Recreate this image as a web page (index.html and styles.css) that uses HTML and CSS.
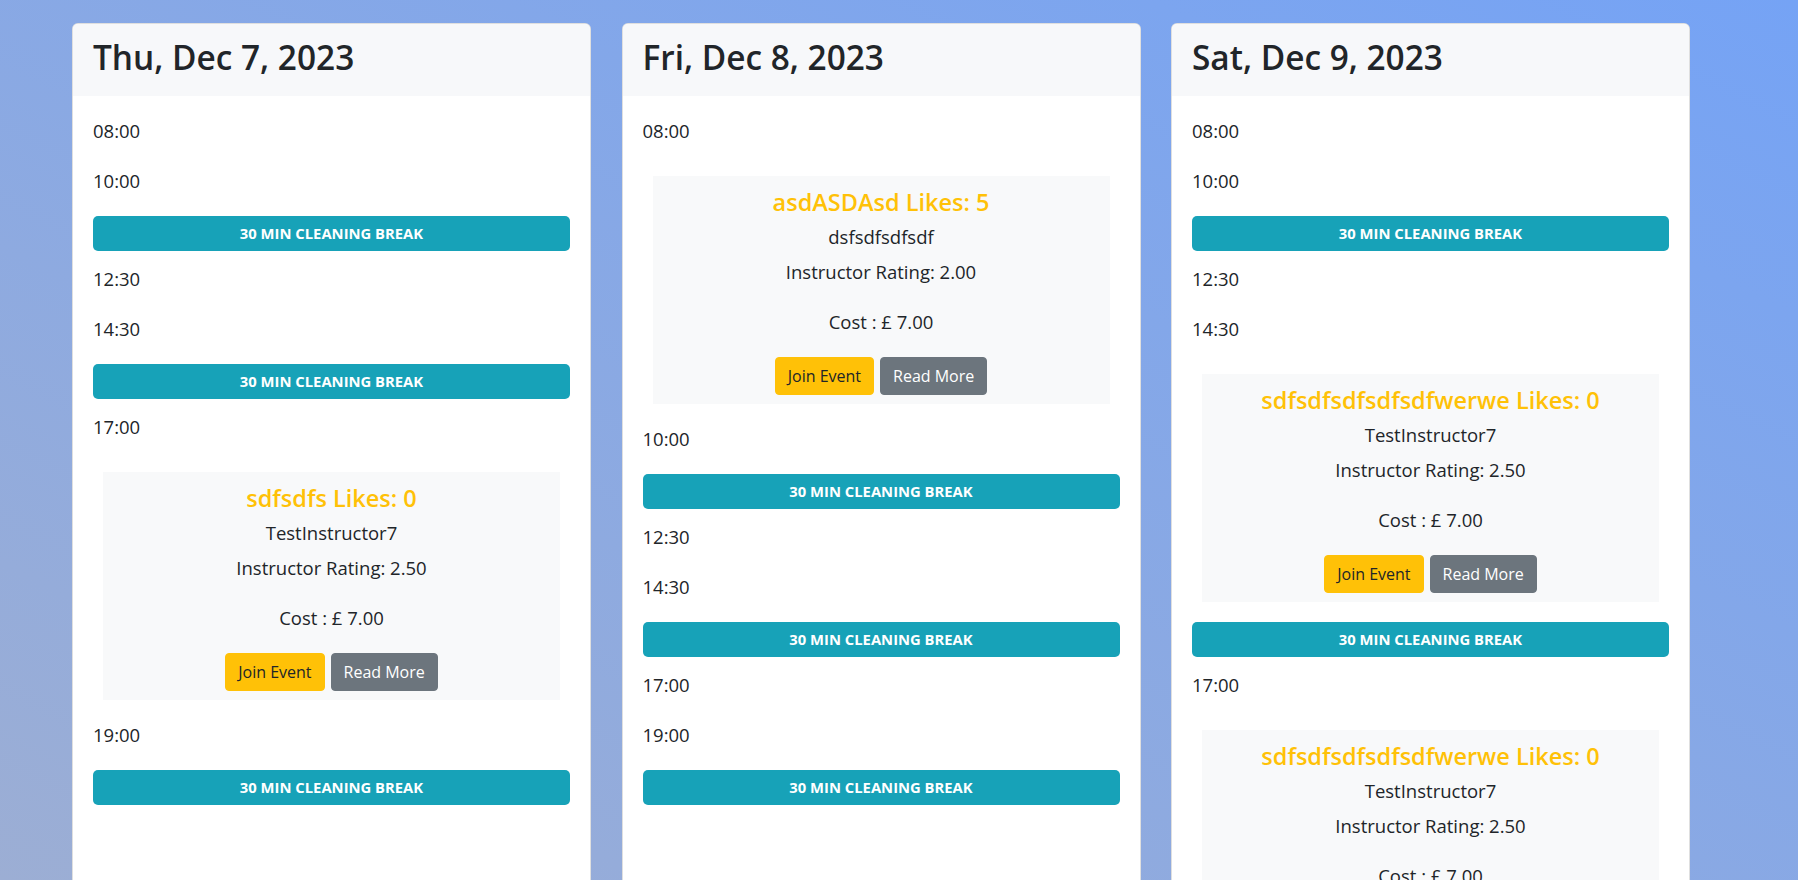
FILE: index.html
```html
<!DOCTYPE html>
<html lang="en">
<head>
<meta charset="utf-8">
<title>Schedule</title>
<link rel="stylesheet" href="styles.css">
</head>
<body>
<div class="days">
  <section class="day">
    <header class="day-header"><h1 class="day-title">Thu, Dec 7, 2023</h1></header>
    <div class="day-body">
      <p class="slot">08:00</p>
      <p class="slot">10:00</p>
      <div class="break">30 min cleaning break</div>
      <p class="slot">12:30</p>
      <p class="slot">14:30</p>
      <div class="break">30 min cleaning break</div>
      <p class="slot">17:00</p>
      <div class="event">
        <h4 class="event-title">sdfsdfs Likes: 0</h4>
        <p class="event-name">TestInstructor7</p>
        <p class="event-rating">Instructor Rating: 2.50</p>
        <p class="event-cost">Cost : £ 7.00</p>
        <div class="event-actions"><button class="btn btn-join">Join Event</button><button class="btn btn-more">Read More</button></div>
      </div>
      <p class="slot">19:00</p>
      <div class="break">30 min cleaning break</div>
    </div>
  </section>
  <section class="day">
    <header class="day-header"><h1 class="day-title">Fri, Dec 8, 2023</h1></header>
    <div class="day-body">
      <p class="slot">08:00</p>
      <div class="event">
        <h4 class="event-title">asdASDAsd Likes: 5</h4>
        <p class="event-name">dsfsdfsdfsdf</p>
        <p class="event-rating">Instructor Rating: 2.00</p>
        <p class="event-cost">Cost : £ 7.00</p>
        <div class="event-actions"><button class="btn btn-join">Join Event</button><button class="btn btn-more">Read More</button></div>
      </div>
      <p class="slot">10:00</p>
      <div class="break">30 min cleaning break</div>
      <p class="slot">12:30</p>
      <p class="slot">14:30</p>
      <div class="break">30 min cleaning break</div>
      <p class="slot">17:00</p>
      <p class="slot">19:00</p>
      <div class="break">30 min cleaning break</div>
    </div>
  </section>
  <section class="day">
    <header class="day-header"><h1 class="day-title">Sat, Dec 9, 2023</h1></header>
    <div class="day-body">
      <p class="slot">08:00</p>
      <p class="slot">10:00</p>
      <div class="break">30 min cleaning break</div>
      <p class="slot">12:30</p>
      <p class="slot">14:30</p>
      <div class="event">
        <h4 class="event-title">sdfsdfsdfsdfsdfwerwe Likes: 0</h4>
        <p class="event-name">TestInstructor7</p>
        <p class="event-rating">Instructor Rating: 2.50</p>
        <p class="event-cost">Cost : £ 7.00</p>
        <div class="event-actions"><button class="btn btn-join">Join Event</button><button class="btn btn-more">Read More</button></div>
      </div>
      <div class="break">30 min cleaning break</div>
      <p class="slot">17:00</p>
      <div class="event">
        <h4 class="event-title">sdfsdfsdfsdfsdfwerwe Likes: 0</h4>
        <p class="event-name">TestInstructor7</p>
        <p class="event-rating">Instructor Rating: 2.50</p>
        <p class="event-cost">Cost : £ 7.00</p>
        <div class="event-actions"><button class="btn btn-join">Join Event</button><button class="btn btn-more">Read More</button></div>
      </div>
      <p class="slot">19:00</p>
      <div class="break">30 min cleaning break</div>
    </div>
  </section>
</div>
</body>
</html>
```
FILE: styles.css
```css
html, body {
  margin: 0;
  padding: 0;
}
body {
  font-family: "Open Sans", "Noto Sans", "Liberation Sans", sans-serif;
  color: #212529;
  background: linear-gradient(to top right, #9caed4, #75a3f5) fixed;
  min-height: 100vh;
}
.days {
  display: grid;
  grid-template-columns: repeat(3, 519px);
  column-gap: 30.5px;
  padding: 23px 0 40px 72px;
  align-items: stretch;
}
.day {
  background: #fff;
  border: 1px solid rgba(0, 0, 0, 0.125);
  border-radius: 6px;
  overflow: hidden;
  display: flex;
  flex-direction: column;
}
.day-header {
  background: #f7f8fa;
  padding: 9px 20px 15px;
}
.day-title {
  margin: 0;
  font-size: 33.4px;
  font-weight: 600;
  line-height: 48px;
  color: #212529;
}
.day-body {
  padding: 20px;
  flex: 1;
}
.slot {
  margin: 0 0 20px;
  font-size: 18.5px;
  line-height: 30px;
}
.break {
  height: 35px;
  line-height: 35px;
  margin: 0 0 13px;
  background: #17a2b8;
  color: #fff;
  border-radius: 5px;
  text-align: center;
  text-transform: uppercase;
  font-weight: 700;
  font-size: 14.8px;
}
.event {
  margin: 30px 10px 20px;
  padding: 11px 10px 9px;
  background: #f8f9fa;
  text-align: center;
}
.event-title {
  margin: 0 0 5px;
  font-size: 23.5px;
  font-weight: 600;
  line-height: 30px;
  color: #ffc107;
}
.event-name, .event-rating, .event-cost {
  margin: 0;
  font-size: 18.5px;
  line-height: 30px;
}
.event-name { margin-bottom: 5px; }
.event-rating { margin-bottom: 20px; }
.event-cost { margin-bottom: 20px; }
.event-actions {
  display: flex;
  justify-content: center;
  gap: 6px;
}
.btn {
  font-family: inherit;
  font-size: 16px;
  line-height: 24px;
  padding: 6px 12px;
  border: 1px solid transparent;
  border-radius: 4px;
  cursor: pointer;
}
.btn-join {
  background: #ffc107;
  border-color: #ffc107;
  color: #212529;
}
.btn-more {
  background: #6c757d;
  border-color: #6c757d;
  color: #fff;
}
```
